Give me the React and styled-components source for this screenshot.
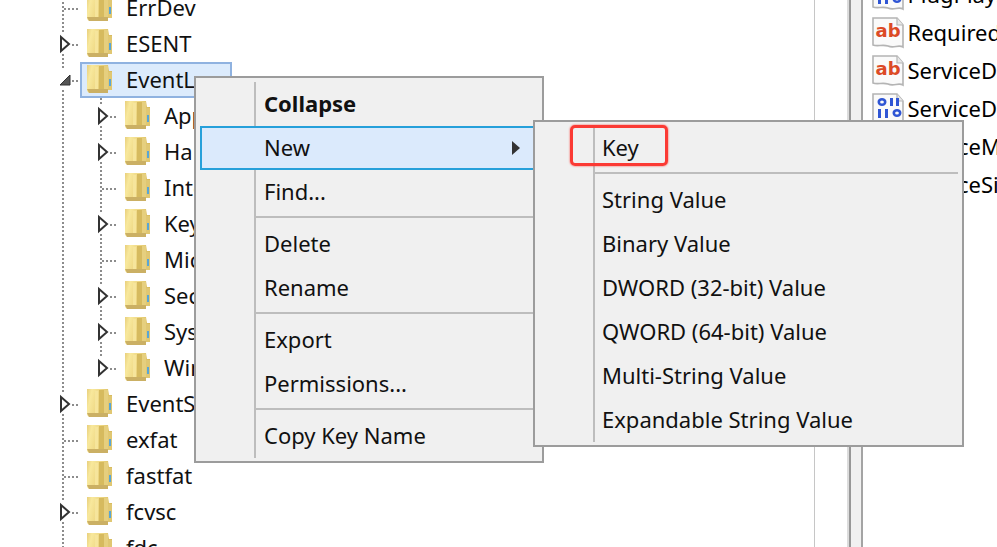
import React from 'react';
import styled, { createGlobalStyle } from 'styled-components';

const GlobalStyle = createGlobalStyle`
  html, body {
    margin: 0;
    padding: 0;
    background: #fff;
  }
`

const Page = styled.div`
  position: relative;
  display: flex;
  width: 997px;
  height: 547px;
  overflow: hidden;
  background: #fff;
  color: #000;
  font-family: 'Noto Sans', 'Open Sans', sans-serif;
  font-size: 22px;
  white-space: nowrap;
`

const TreePane = styled.div`
  width: 815px;
  flex: none;
  margin-top: -10px;
  padding-left: 60px;
  box-sizing: border-box;
  border-right: 1.5px solid #c6c6c6;
`

const Row = styled.div`
  display: flex;
  height: 36px;
`

const Guide = styled.span`
  flex: none;
  width: 38px;
  height: 100%;
  background: repeating-linear-gradient(to bottom, #8c8c8c 0 2px, transparent 2px 4px) 2px 0 / 2px 100% no-repeat;
`

const Connector = styled.span`
  position: relative;
  flex: none;
  width: 20px;
  height: 100%;
  background:
    repeating-linear-gradient(to bottom, #8c8c8c 0 2px, transparent 2px 4px) 2px 0 / 2px ${p => p.$last ? '50%' : '100%'} no-repeat,
    repeating-linear-gradient(to right, #8c8c8c 0 2px, transparent 2px 4px) 4px 18px / 16px 2px no-repeat;
`

const Toggle = styled.svg`
  position: absolute;
  left: -2px;
  top: 8px;
  width: 14px;
  height: 20px;
  background: #fff;
`

const Item = styled.div`
  display: flex;
  align-items: center;
  gap: 14px;
  height: 36px;
  box-sizing: border-box;
  padding: 0 ${p => p.$selected ? '8px' : '0'} 0 4px;
  border: 2px solid ${p => p.$selected ? '#8fb2e0' : 'transparent'};
  background: ${p => p.$selected ? '#dcebfc' : 'transparent'};
  color: #111;
`

const Label = styled.span`
  margin-bottom: 2px;
`

const Gap = styled.div`
  flex: none;
  width: 31.5px;
  border-right: 2px solid #dcdcdc;
`

const Splitter = styled.div`
  flex: none;
  width: 10px;
  background: #f1f1f1;
  border-left: 2px solid #989898;
  border-right: 2px solid #a4a4a4;
`

const ValueList = styled.div`
  flex: 1;
  margin-top: -24px;
  padding-left: 9px;
  overflow: hidden;
`

const ValueRow = styled.div`
  display: flex;
  align-items: center;
  gap: 4px;
  height: 38px;
`

const Menu = styled.div`
  position: absolute;
  left: ${p => p.$left}px;
  top: ${p => p.$top}px;
  width: ${p => p.$width}px;
  box-sizing: border-box;
  padding: 4px 4px 3px;
  background: #f0f0f0;
  border: 2px solid #9c9c9c;
  color: #111;

  &::before {
    content: '';
    position: absolute;
    left: ${p => p.$rail}px;
    top: 4px;
    bottom: 3px;
    width: 2px;
    background: #bdbdbd;
  }
`

const MenuItem = styled.div`
  position: relative;
  display: flex;
  align-items: center;
  height: 44px;
  box-sizing: border-box;
  padding-left: ${p => p.$indent}px;
  font-weight: ${p => p.$bold ? 700 : 400};
  border: ${p => p.$active ? '2px solid #26a0da' : 'none'};
  background: ${p => p.$active ? '#dbeafc' : 'transparent'};
`

const Arrow = styled.span`
  position: absolute;
  right: 16px;
  top: 13px;
  border-left: 8px solid #333;
  border-top: 7px solid transparent;
  border-bottom: 7px solid transparent;
`

const Separator = styled.div`
  position: relative;
  height: 8px;
  margin-left: ${p => p.$indent}px;

  &::after {
    content: '';
    position: absolute;
    left: 0;
    right: 0;
    top: 2px;
    height: 2px;
    background: #bdbdbd;
  }
`

const Callout = styled.div`
  position: absolute;
  left: 570px;
  top: 125px;
  width: 98px;
  height: 41px;
  box-sizing: border-box;
  border: 3px solid #fb3a34;
  border-radius: 5px;
  box-shadow: 0 0 2px #fb3a34;
`

const Folder = () => (
  <svg width="26" height="30" viewBox="0 0 26 30" style={{ flex: 'none', marginBottom: 2 }}>
    <defs>
      <linearGradient id="folderFace" x1="0" y1="0" x2="1" y2="0.25">
        <stop offset="0" stopColor="#e8cf7c" />
        <stop offset="0.2" stopColor="#f8e89c" />
        <stop offset="0.5" stopColor="#efd986" />
        <stop offset="1" stopColor="#d6b95c" />
      </linearGradient>
    </defs>
    <path d="M1 1 H22 L23 7 H26 V26 H22 V29 H3 L1 27 Z" fill="url(#folderFace)" />
    <path d="M9 3 H12 V27 H9 Z" fill="#f6e59c" />
    <path d="M13 2 H18 V28 H13 Z" fill="#d6ba5e" />
    <path d="M18 2 H22 V28 H18 Z" fill="#e6cf7e" />
    <path d="M22 8 H26 V26 H22 Z" fill="#e0c772" />
    <path d="M23 15 H25 V22 H23 Z" fill="#58a6d6" />
    <path d="M1 25 H22 V29 H3 Z" fill="#cbb064" />
  </svg>
)

const Expand = ({ open }) => (
  <Toggle viewBox="0 0 14 20">
    {open
      ? <path d="M2 15 L12 5 V15 Z" fill="#555" stroke="#333" strokeWidth="1" />
      : <path d="M3 3 L11 10 L3 17 Z" fill="#fff" stroke="#333" strokeWidth="2" />}
  </Toggle>
)

const DocIcon = ({ children }) => (
  <svg width="32" height="32" viewBox="0 0 32 32" style={{ flex: 'none' }}>
    <path d="M1 1 H25 L31 8 V30 C26 27 22 32 16 29 C10 27 6 30 1 28 Z" fill="#fafafa" stroke="#b4b4b4" strokeWidth="1.6" />
    <path d="M25 1 V8 H31" fill="#e8e8e8" stroke="#b4b4b4" strokeWidth="1.2" />
    {children}
  </svg>
)

const StringIcon = () => (
  <DocIcon>
    <text x="16" y="20" textAnchor="middle" fontFamily="'DejaVu Sans', sans-serif" fontWeight="700" fontSize="18" fill="#dc4a26">ab</text>
  </DocIcon>
)

const BinaryIcon = () => (
  <DocIcon>
    <g fill="none" stroke="#2f55d4" strokeWidth="2.6">
      <ellipse cx="10" cy="9" rx="3.2" ry="2.8" />
      <ellipse cx="25" cy="20" rx="3.2" ry="2.8" />
    </g>
    <g fill="#2f55d4">
      <rect x="18" y="5" width="3" height="8" />
      <rect x="24" y="5" width="3" height="8" />
      <rect x="6" y="16" width="3" height="9" />
      <rect x="13" y="16" width="3" height="9" />
    </g>
  </DocIcon>
)

const treeRows = [
  { name: 'ErrDev' },
  { name: 'ESENT', toggle: true },
  { name: 'EventLog', open: true, selected: true },
  { name: 'Application', child: true, toggle: true },
  { name: 'HardwareEvents', child: true, toggle: true },
  { name: 'Internet Explorer', child: true },
  { name: 'Key Management Service', child: true, toggle: true },
  { name: 'Microsoft-Windows', child: true },
  { name: 'Security', child: true, toggle: true },
  { name: 'System', child: true, toggle: true },
  { name: 'Windows PowerShell', child: true, toggle: true, last: true },
  { name: 'EventSystem', toggle: true },
  { name: 'exfat' },
  { name: 'fastfat' },
  { name: 'fcvsc', toggle: true },
  { name: 'fdc' },
]

const values = [
  { name: 'PlugPlayServiceType', binary: true },
  { name: 'RequiredPrivileges' },
  { name: 'ServiceDll' },
  { name: 'ServiceDllUnloadOnStop', binary: true },
  { name: 'ServiceMain' },
  { name: 'ServiceSidType', binary: true },
]

const mainMenu = [
  [{ label: 'Collapse', bold: true }, { label: 'New', active: true }, { label: 'Find...' }],
  [{ label: 'Delete' }, { label: 'Rename' }],
  [{ label: 'Export' }, { label: 'Permissions...' }],
  [{ label: 'Copy Key Name' }],
]

const newMenu = [
  ['Key'],
  ['String Value', 'Binary Value', 'DWORD (32-bit) Value', 'QWORD (64-bit) Value', 'Multi-String Value', 'Expandable String Value'],
]

const App = () => (
  <Page>
    <GlobalStyle />
    <TreePane>
      {treeRows.map(row => (
        <Row key={row.name}>
          {row.child && <Guide />}
          <Connector $last={row.last}>
            {row.toggle && <Expand />}
            {row.open && <Expand open />}
          </Connector>
          <Item $selected={row.selected}>
            <Folder />
            <Label>{row.name}</Label>
          </Item>
        </Row>
      ))}
    </TreePane>
    <Gap />
    <Splitter />
    <ValueList>
      {values.map(v => (
        <ValueRow key={v.name}>
          {v.binary ? <BinaryIcon /> : <StringIcon />}
          <Label>{v.name}</Label>
        </ValueRow>
      ))}
    </ValueList>

    <Menu $left={194} $top={76} $width={350} $rail={58}>
      {mainMenu.map((group, i) => (
        <React.Fragment key={i}>
          {i > 0 && <Separator $indent={56} />}
          {group.map(item => (
            <MenuItem key={item.label} $bold={item.bold} $active={item.active} $indent={item.active ? 62 : 64}>
              <Label>{item.label}</Label>
              {item.active && <Arrow />}
            </MenuItem>
          ))}
        </React.Fragment>
      ))}
    </Menu>

    <Menu $left={533} $top={120} $width={431} $rail={58}>
      {newMenu.map((group, i) => (
        <React.Fragment key={i}>
          {i > 0 && <Separator $indent={56} />}
          {group.map(label => (
            <MenuItem key={label} $indent={63}><Label>{label}</Label></MenuItem>
          ))}
        </React.Fragment>
      ))}
    </Menu>
    <Callout />
  </Page>
);

export default App
